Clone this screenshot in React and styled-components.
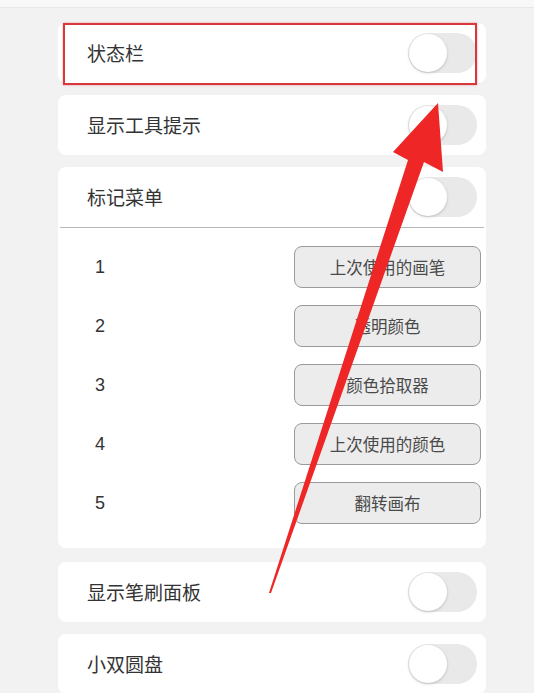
import React, { useState } from "react";
import styled, { createGlobalStyle } from "styled-components";

const GlobalStyle = createGlobalStyle`
  html, body {
    margin: 0;
    padding: 0;
    background: #f2f2f2;
    font-family: "Noto Sans CJK SC", "Noto Sans", sans-serif;
  }
`;

const shortcuts = ["上次使用的画笔", "透明颜色", "颜色拾取器", "上次使用的颜色", "翻转画布"];

const App = () => {
  const [toggles, setToggles] = useState({
    status: false,
    tips: false,
    marks: false,
    brush: false,
    dial: false,
  });

  const flip = (key) => setToggles({ ...toggles, [key]: !toggles[key] });

  return (
    <Page>
      <GlobalStyle />
      <TopBar />
      <List>
        <Card>
          <Row>
            <Label>状态栏</Label>
            <Toggle on={toggles.status} onClick={() => flip("status")} />
          </Row>
          <Highlight />
        </Card>
        <Card>
          <Row>
            <Label>显示工具提示</Label>
            <Toggle on={toggles.tips} onClick={() => flip("tips")} />
          </Row>
        </Card>
        <Card>
          <Row>
            <Label>标记菜单</Label>
            <Toggle on={toggles.marks} onClick={() => flip("marks")} />
          </Row>
          <Divider />
          <ShortcutList>
            {shortcuts.map((name, i) => (
              <ShortcutRow key={name}>
                <Num>{i + 1}</Num>
                <ActionButton>{name}</ActionButton>
              </ShortcutRow>
            ))}
          </ShortcutList>
        </Card>
        <Card $spaced>
          <Row>
            <Label>显示笔刷面板</Label>
            <Toggle on={toggles.brush} onClick={() => flip("brush")} />
          </Row>
        </Card>
        <Card>
          <Row>
            <Label>小双圆盘</Label>
            <Toggle on={toggles.dial} onClick={() => flip("dial")} />
          </Row>
        </Card>
      </List>
      <Arrow viewBox="0 0 534 693">
        <polygon
          points="269,593 408,160 393,152 438,103 443,172 424,162 271,593"
          fill="#ee2626"
        />
      </Arrow>
    </Page>
  );
};

const Toggle = ({ on, onClick }) => (
  <Track $on={on} onClick={onClick}>
    <Knob $on={on} />
  </Track>
);

export default App;

const Page = styled.div`
  position: relative;
  width: 534px;
  height: 693px;
  overflow: hidden;
  background: #f2f2f2;
`;

const TopBar = styled.div`
  height: 7px;
  background: #f8f8f8;
  border-bottom: 1px solid #e8e8e8;
`;

const List = styled.div`
  display: flex;
  flex-direction: column;
  gap: 12px;
  padding: 15px 48px 0 58px;
`;

const Card = styled.div`
  position: relative;
  background: #ffffff;
  border-radius: 8px;
  margin-top: ${(p) => (p.$spaced ? "2px" : "0")};
`;

const Row = styled.div`
  height: 60px;
  display: flex;
  align-items: center;
  justify-content: space-between;
  padding: 0 9px 0 29px;
`;

const Label = styled.div`
  font-size: 19px;
  color: #333333;
  margin-top: -2px;
`;

const Track = styled.div`
  width: 69px;
  height: 40px;
  border-radius: 20px;
  background: ${(p) => (p.$on ? "#4cd964" : "#e9e9e9")};
  display: flex;
  align-items: center;
  justify-content: ${(p) => (p.$on ? "flex-end" : "flex-start")};
  cursor: pointer;
`;

const Knob = styled.div`
  width: 38px;
  height: 38px;
  margin: 0 1px;
  border-radius: 50%;
  background: #ffffff;
  box-shadow: 0 1px 3px rgba(0, 0, 0, 0.2);
`;

const Highlight = styled.div`
  position: absolute;
  left: 5px;
  right: 9px;
  top: 0;
  bottom: -2px;
  border: 2px solid #d8373c;
  box-shadow: 0 0 2px rgba(216, 55, 60, 0.5);
  pointer-events: none;
`;

const Divider = styled.div`
  height: 1px;
  margin: 0 2px;
  background: #b8b8b8;
`;

const ShortcutList = styled.div`
  display: flex;
  flex-direction: column;
  gap: 17px;
  padding: 18px 5px 24px 37px;
`;

const ShortcutRow = styled.div`
  display: flex;
  align-items: center;
  justify-content: space-between;
`;

const Num = styled.div`
  font-family: "Liberation Sans", "Noto Sans", sans-serif;
  font-size: 18px;
  color: #333333;
`;

const ActionButton = styled.button`
  width: 187px;
  height: 42px;
  border: 1px solid #9a9a9a;
  border-radius: 8px;
  background: #ececec;
  font-family: "Noto Sans CJK SC", sans-serif;
  font-size: 16.5px;
  color: #4a4a4a;
  cursor: pointer;
`;

const Arrow = styled.svg`
  position: absolute;
  left: 0;
  top: 0;
  width: 534px;
  height: 693px;
  pointer-events: none;
`;
